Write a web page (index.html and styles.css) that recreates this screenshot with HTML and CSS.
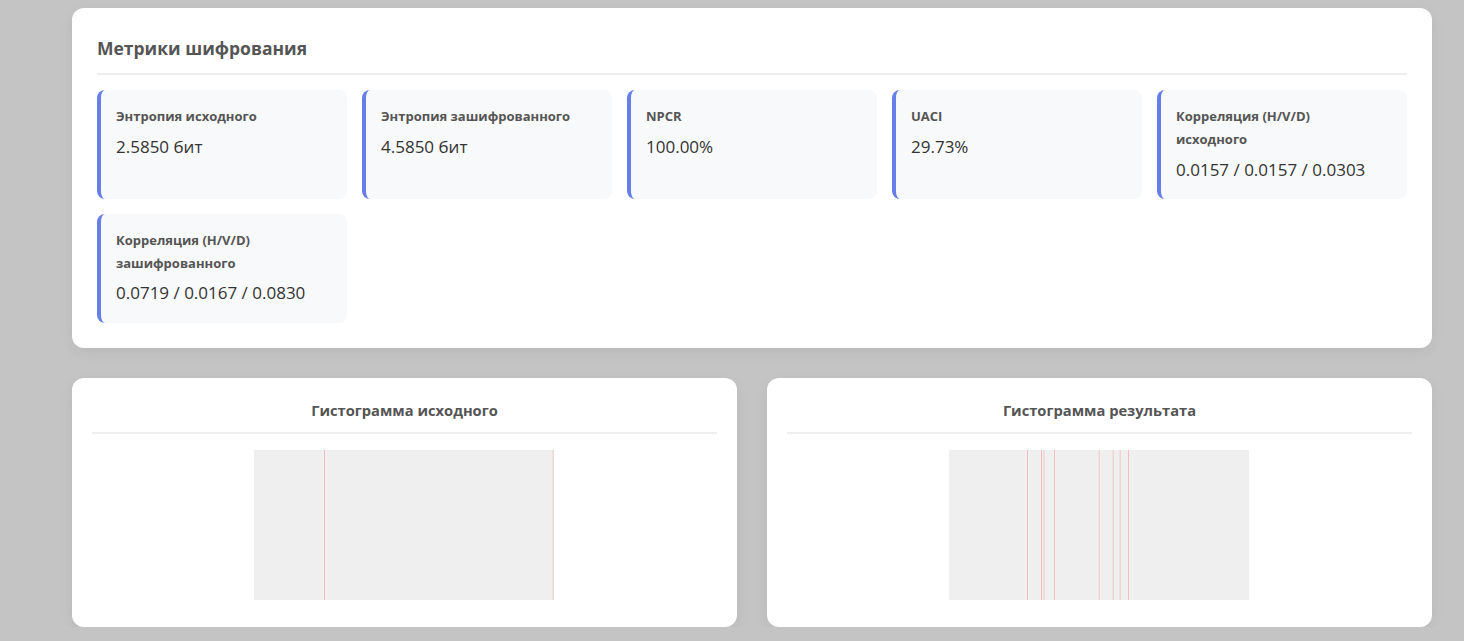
FILE: index.html
```html
<!DOCTYPE html>
<html lang="ru">
<head>
<meta charset="utf-8">
<title>Метрики шифрования</title>
<link rel="stylesheet" href="styles.css">
</head>
<body>
<main class="page">
  <section class="card metrics-card">
    <h2 class="card-title">Метрики шифрования</h2>
    <div class="metrics-grid">
      <div class="metric"><div class="metric-label">Энтропия исходного</div><div class="metric-value">2.5850 бит</div></div>
      <div class="metric"><div class="metric-label">Энтропия зашифрованного</div><div class="metric-value">4.5850 бит</div></div>
      <div class="metric"><div class="metric-label">NPCR</div><div class="metric-value">100.00%</div></div>
      <div class="metric"><div class="metric-label">UACI</div><div class="metric-value">29.73%</div></div>
      <div class="metric"><div class="metric-label">Корреляция (H/V/D) исходного</div><div class="metric-value">0.0157 / 0.0157 / 0.0303</div></div>
      <div class="metric"><div class="metric-label">Корреляция (H/V/D) зашифрованного</div><div class="metric-value">0.0719 / 0.0167 / 0.0830</div></div>
    </div>
  </section>

  <div class="hist-row">
    <section class="card hist-card">
      <h3 class="hist-title">Гистограмма исходного</h3>
      <div class="hist-body">
        <svg class="hist" width="300" height="150" viewBox="0 0 300 150">
          <rect width="300" height="150" fill="#efefef"/>
          <rect x="70" y="0" width="1" height="150" fill="#f7bcbc"/>
          <rect x="298.6" y="0" width="1.2" height="150" fill="#f3cccc"/>
        </svg>
      </div>
    </section>
    <section class="card hist-card">
      <h3 class="hist-title">Гистограмма результата</h3>
      <div class="hist-body">
        <svg class="hist" width="300" height="150" viewBox="0 0 300 150">
          <rect width="300" height="150" fill="#efefef"/>
          <rect x="78" y="0" width="1" height="150" fill="#f7bcbc"/>
          <rect x="92" y="0" width="1" height="150" fill="#f7bcbc"/>
          <rect x="94.2" y="0" width="1.4" height="150" fill="#f1d4d4"/>
          <rect x="105" y="0" width="1" height="150" fill="#f7bcbc"/>
          <rect x="149.6" y="0" width="1.4" height="150" fill="#f1d4d4"/>
          <rect x="163.6" y="0" width="1.2" height="150" fill="#f3cccc"/>
          <rect x="170.6" y="0" width="1.2" height="150" fill="#f3cccc"/>
          <rect x="179" y="0" width="1" height="150" fill="#f7bcbc"/>
        </svg>
      </div>
    </section>
  </div>
</main>
</body>
</html>
```

FILE: styles.css
```css
* { box-sizing: border-box; }

html, body {
  margin: 0;
  padding: 0;
  background: #c4c4c4;
  font-family: "Open Sans", "Noto Sans", "DejaVu Sans", sans-serif;
  color: #333;
}

.page {
  padding: 8px 32px 0 72px;
  display: flex;
  flex-direction: column;
  gap: 30px;
}

.card {
  background: #fff;
  border-radius: 12px;
  box-shadow: 0 4px 14px rgba(0, 0, 0, 0.06);
}

.metrics-card {
  padding: 25px;
}

.card-title {
  margin: 0 0 15px;
  padding-bottom: 10px;
  border-bottom: 2px solid #eeeeee;
  font-size: 17.5px;
  line-height: 30px;
  font-weight: 700;
  color: #555;
}

.metrics-grid {
  display: grid;
  grid-template-columns: repeat(5, 1fr);
  gap: 15px;
}

.metric {
  background: #f8f9fa;
  border-left: 4px solid #667eea;
  border-radius: 8px;
  padding: 15px;
}

.metric-label {
  padding-right: 10px;
  font-size: 13px;
  line-height: 22.8px;
  font-weight: 700;
  color: #555;
}

.metric-value {
  margin-top: 5px;
  font-size: 17px;
  line-height: 28.2px;
  color: #333;
}

.hist-row {
  display: grid;
  grid-template-columns: 1fr 1fr;
  gap: 30px;
}

.hist-card {
  padding: 20px;
}

.hist-title {
  margin: 0 0 16px;
  padding-bottom: 10px;
  border-bottom: 2px solid #eeeeee;
  text-align: center;
  font-size: 14.7px;
  line-height: 24px;
  font-weight: 700;
  color: #555;
}

.hist-body {
  display: flex;
  justify-content: center;
  padding-bottom: 7px;
}

.hist {
  display: block;
  margin-left: -1px;
}
```
